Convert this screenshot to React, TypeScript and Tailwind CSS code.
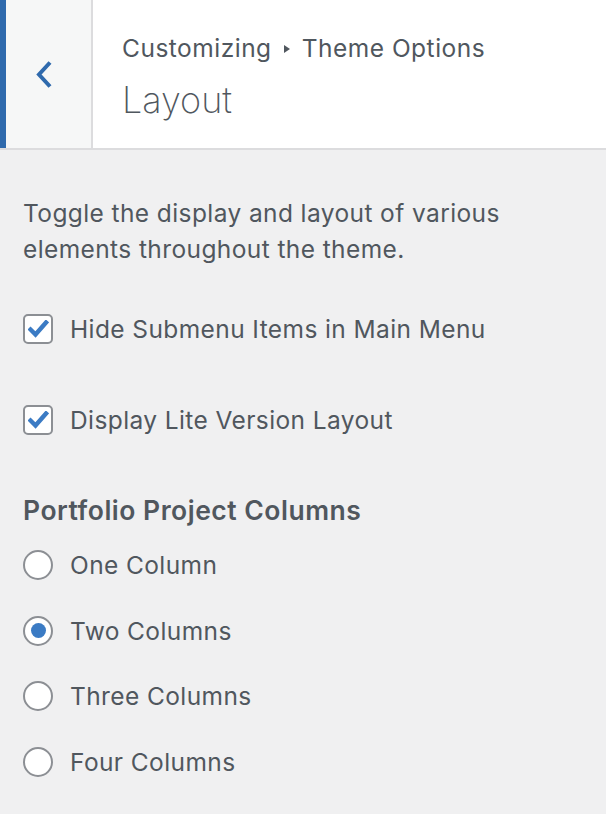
import React, { useState } from "react";

const font = "font-['Inter','Liberation_Sans',sans-serif]";

const Checkbox = ({ checked, label, onChange }: { checked: boolean; label: string; onChange: () => void }) => (
  <label className="flex items-center gap-[17px] cursor-pointer">
    <span className="w-[30px] h-[30px] rounded-[5px] border-2 border-[#8c8f94] bg-white flex items-center justify-center">
      {checked && (
        <svg width="21" height="18" viewBox="0 0 21 18" fill="none">
          <path d="M2.5 9.5 L7.5 14.5 L18 2.5" stroke="#3b7bc4" strokeWidth="4.4" strokeLinecap="square" strokeLinejoin="miter" />
        </svg>
      )}
    </span>
    <input type="checkbox" className="hidden" checked={checked} onChange={onChange} />
    <span className="text-[24.5px] leading-[36px] tracking-[0.4px] text-[#50575e]">{label}</span>
  </label>
);

const Radio = ({ checked, label, onSelect }: { checked: boolean; label: string; onSelect: () => void }) => (
  <label className="flex items-center gap-[17px] cursor-pointer" onClick={onSelect}>
    <span className="w-[30px] h-[30px] rounded-full border-2 border-[#8c8f94] bg-white flex items-center justify-center">
      {checked && <span className="w-[15px] h-[15px] rounded-full bg-[#3b7bc4]" />}
    </span>
    <span className="text-[24.5px] leading-[36px] tracking-[0.4px] text-[#50575e]">{label}</span>
  </label>
);

export default function App() {
  const [hideSub, setHideSub] = useState(true);
  const [lite, setLite] = useState(true);
  const [cols, setCols] = useState("Two Columns");

  return (
    <div className={`w-[606px] h-[814px] bg-[#f0f0f1] overflow-hidden ${font}`}>
      {/* header */}
      <div className="flex h-[150px] bg-white border-b-2 border-[#dcdcde]">
        <button className="w-[93px] h-full bg-[#f6f7f7] border-l-[6px] border-l-[#2f6aad] border-r-2 border-r-[#dcdcde] flex items-center pl-[29px]">
          <svg width="18" height="29" viewBox="0 0 18 29" fill="none">
            <path d="M15 2.5 L4 14.5 L15 26.5" stroke="#2f6aad" strokeWidth="4" />
          </svg>
        </button>
        <div className="pl-[29px] pt-[31px] flex flex-col">
          <div className="flex items-center text-[24.5px] leading-[34px] tracking-[0.5px] text-[#50575e]">
            <span>Customizing</span>
            <svg width="8" height="10" viewBox="0 0 8 10" className="mx-[11px] mt-[2px]">
              <path d="M1 1 L7 5 L1 9 Z" fill="#50575e" />
            </svg>
            <span>Theme Options</span>
          </div>
          <div className="text-[36px] leading-[46px] font-extralight text-[#50575e] mt-[12px]">Layout</div>
        </div>
      </div>

      {/* content */}
      <div className="px-[23px]">
        <p className="mt-[45px] text-[24.5px] leading-[36px] tracking-[0.4px] text-[#50575e]">
          Toggle the display and layout of various
          <br />
          elements throughout the theme.
        </p>

        <div className="mt-[44px] flex flex-col gap-[55px]">
          <Checkbox checked={hideSub} label="Hide Submenu Items in Main Menu" onChange={() => setHideSub(!hideSub)} />
          <Checkbox checked={lite} label="Display Lite Version Layout" onChange={() => setLite(!lite)} />
        </div>

        <h3 className="mt-[54px] text-[26.5px] leading-[36px] tracking-[0.5px] font-semibold text-[#50575e]">
          Portfolio Project Columns
        </h3>

        <div className="mt-[19px] flex flex-col gap-[29.5px]">
          {["One Column", "Two Columns", "Three Columns", "Four Columns"].map((c) => (
            <Radio key={c} label={c} checked={cols === c} onSelect={() => setCols(c)} />
          ))}
        </div>
      </div>
    </div>
  );
}
